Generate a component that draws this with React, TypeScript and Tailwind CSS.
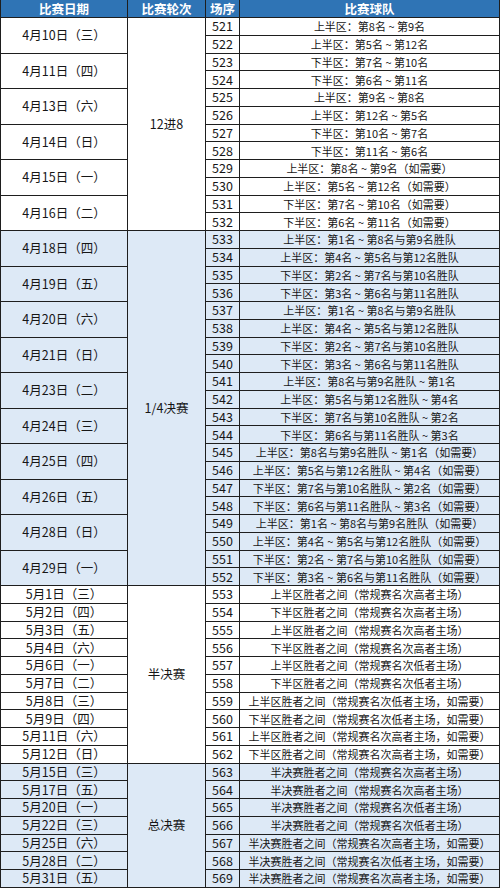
import React from 'react';

type Game = { no: number; team: string };
type Day = { date: string; span: string; games: Game[] };
type Stage = { name: string; span: string; blue: boolean; days: Day[] };

const g = (no: number, team: string): Game => ({ no, team });

const stages: Stage[] = [
  {
    name: '12进8',
    span: 'row-span-12',
    blue: false,
    days: [
      { date: '4月10日（三）', span: 'row-span-2', games: [g(521, '上半区：第8名 ~ 第9名'), g(522, '上半区：第5名 ~ 第12名')] },
      { date: '4月11日（四）', span: 'row-span-2', games: [g(523, '下半区：第7名 ~ 第10名'), g(524, '下半区：第6名 ~ 第11名')] },
      { date: '4月13日（六）', span: 'row-span-2', games: [g(525, '上半区：第9名 ~ 第8名'), g(526, '上半区：第12名 ~ 第5名')] },
      { date: '4月14日（日）', span: 'row-span-2', games: [g(527, '下半区：第10名 ~ 第7名'), g(528, '下半区：第11名 ~ 第6名')] },
      { date: '4月15日（一）', span: 'row-span-2', games: [g(529, '上半区：第8名 ~ 第9名（如需要）'), g(530, '上半区：第5名 ~ 第12名（如需要）')] },
      { date: '4月16日（二）', span: 'row-span-2', games: [g(531, '下半区：第7名 ~ 第10名（如需要）'), g(532, '下半区：第6名 ~ 第11名（如需要）')] },
    ],
  },
  {
    name: '1/4决赛',
    span: 'row-span-20',
    blue: true,
    days: [
      { date: '4月18日（四）', span: 'row-span-2', games: [g(533, '上半区：第1名 ~ 第8名与第9名胜队'), g(534, '上半区：第4名 ~ 第5名与第12名胜队')] },
      { date: '4月19日（五）', span: 'row-span-2', games: [g(535, '下半区：第2名 ~ 第7名与第10名胜队'), g(536, '下半区：第3名 ~ 第6名与第11名胜队')] },
      { date: '4月20日（六）', span: 'row-span-2', games: [g(537, '上半区：第1名 ~ 第8名与第9名胜队'), g(538, '上半区：第4名 ~ 第5名与第12名胜队')] },
      { date: '4月21日（日）', span: 'row-span-2', games: [g(539, '下半区：第2名 ~ 第7名与第10名胜队'), g(540, '下半区：第3名 ~ 第6名与第11名胜队')] },
      { date: '4月23日（二）', span: 'row-span-2', games: [g(541, '上半区：第8名与第9名胜队 ~ 第1名'), g(542, '上半区：第5名与第12名胜队 ~ 第4名')] },
      { date: '4月24日（三）', span: 'row-span-2', games: [g(543, '下半区：第7名与第10名胜队 ~ 第2名'), g(544, '下半区：第6名与第11名胜队 ~ 第3名')] },
      { date: '4月25日（四）', span: 'row-span-2', games: [g(545, '上半区：第8名与第9名胜队 ~ 第1名（如需要）'), g(546, '上半区：第5名与第12名胜队 ~ 第4名（如需要）')] },
      { date: '4月26日（五）', span: 'row-span-2', games: [g(547, '下半区：第7名与第10名胜队 ~ 第2名（如需要）'), g(548, '下半区：第6名与第11名胜队 ~ 第3名（如需要）')] },
      { date: '4月28日（日）', span: 'row-span-2', games: [g(549, '上半区：第1名 ~ 第8名与第9名胜队（如需要）'), g(550, '上半区：第4名 ~ 第5名与第12名胜队（如需要）')] },
      { date: '4月29日（一）', span: 'row-span-2', games: [g(551, '下半区：第2名 ~ 第7名与第10名胜队（如需要）'), g(552, '下半区：第3名 ~ 第6名与第11名胜队（如需要）')] },
    ],
  },
  {
    name: '半决赛',
    span: 'row-span-10',
    blue: false,
    days: [
      { date: '5月1日（三）', span: 'row-span-1', games: [g(553, '上半区胜者之间（常规赛名次高者主场）')] },
      { date: '5月2日（四）', span: 'row-span-1', games: [g(554, '下半区胜者之间（常规赛名次高者主场）')] },
      { date: '5月3日（五）', span: 'row-span-1', games: [g(555, '上半区胜者之间（常规赛名次高者主场）')] },
      { date: '5月4日（六）', span: 'row-span-1', games: [g(556, '下半区胜者之间（常规赛名次高者主场）')] },
      { date: '5月6日（一）', span: 'row-span-1', games: [g(557, '上半区胜者之间（常规赛名次低者主场）')] },
      { date: '5月7日（二）', span: 'row-span-1', games: [g(558, '下半区胜者之间（常规赛名次低者主场）')] },
      { date: '5月8日（三）', span: 'row-span-1', games: [g(559, '上半区胜者之间（常规赛名次低者主场，如需要）')] },
      { date: '5月9日（四）', span: 'row-span-1', games: [g(560, '下半区胜者之间（常规赛名次低者主场，如需要）')] },
      { date: '5月11日（六）', span: 'row-span-1', games: [g(561, '上半区胜者之间（常规赛名次高者主场，如需要）')] },
      { date: '5月12日（日）', span: 'row-span-1', games: [g(562, '下半区胜者之间（常规赛名次高者主场，如需要）')] },
    ],
  },
  {
    name: '总决赛',
    span: 'row-span-7',
    blue: true,
    days: [
      { date: '5月15日（三）', span: 'row-span-1', games: [g(563, '半决赛胜者之间（常规赛名次高者主场）')] },
      { date: '5月17日（五）', span: 'row-span-1', games: [g(564, '半决赛胜者之间（常规赛名次高者主场）')] },
      { date: '5月20日（一）', span: 'row-span-1', games: [g(565, '半决赛胜者之间（常规赛名次低者主场）')] },
      { date: '5月22日（三）', span: 'row-span-1', games: [g(566, '半决赛胜者之间（常规赛名次低者主场）')] },
      { date: '5月25日（六）', span: 'row-span-1', games: [g(567, '半决赛胜者之间（常规赛名次高者主场，如需要）')] },
      { date: '5月28日（二）', span: 'row-span-1', games: [g(568, '半决赛胜者之间（常规赛名次低者主场，如需要）')] },
      { date: '5月31日（五）', span: 'row-span-1', games: [g(569, '半决赛胜者之间（常规赛名次高者主场，如需要）')] },
    ],
  },
];

const cell = 'flex items-center justify-center whitespace-nowrap leading-4';

export default function App() {
  return (
    <div
      className="grid w-[500px] h-[888px] grid-cols-[126px_77px_33px_1fr] grid-rows-[17px_repeat(49,16.755px)] gap-px px-px pb-px bg-[#1e1e1e] text-[#161616]"
      style={{ fontFamily: '"Noto Sans CJK SC", "Noto Sans", sans-serif' }}
    >
      {['比赛日期', '比赛轮次', '场序', '比赛球队'].map(h => (
        <div key={h} className={`${cell} bg-[#2f74b5] text-white text-[12.5px] font-bold`}>
          {h}
        </div>
      ))}

      {stages.map(stage => {
        const bg = stage.blue ? 'bg-[#dde9f6]' : 'bg-white';
        return stage.days.map((day, di) =>
          day.games.map((game, gi) => (
            <React.Fragment key={game.no}>
              {gi === 0 && (
                <div className={`${cell} ${bg} ${day.span} text-[12.5px]`}>{day.date}</div>
              )}
              {di === 0 && gi === 0 && (
                <div className={`${cell} ${bg} ${stage.span} text-[12.5px]`}>{stage.name}</div>
              )}
              <div className={`${cell} ${bg} text-[12.5px]`}>{game.no}</div>
              <div className={`${cell} ${bg} text-[11px]`}>{game.team}</div>
            </React.Fragment>
          ))
        );
      })}
    </div>
  );
}
